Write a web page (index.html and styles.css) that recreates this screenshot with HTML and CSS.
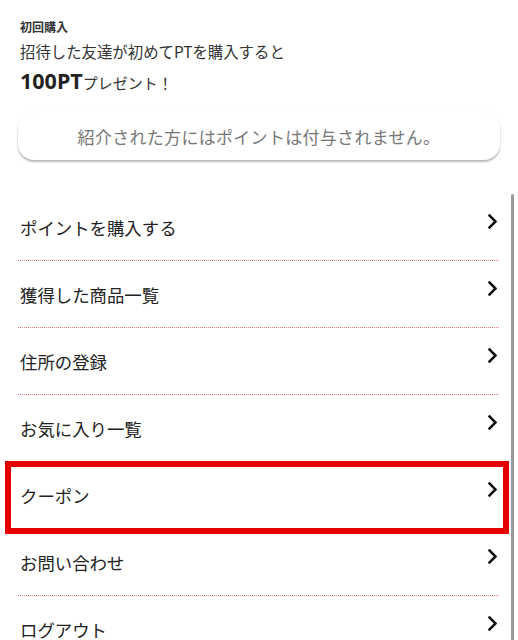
FILE: index.html
```html
<!DOCTYPE html>
<html lang="ja">
<head>
<meta charset="utf-8">
<link rel="stylesheet" href="styles.css">
</head>
<body>
<div class="page">
  <section class="intro">
    <div class="label">初回購入</div>
    <div class="desc">招待した友達が初めてPTを購入すると</div>
    <div class="gift"><span class="pt">100PT</span><span class="gift-text">プレゼント！</span></div>
    <div class="notice">紹介された方にはポイントは付与されません。</div>
  </section>
  <ul class="menu">
    <li class="item"><span>ポイントを購入する</span><svg class="chev" viewBox="0 0 9 15"><path d="M1.5 1.5 L7.5 7.5 L1.5 13.5" /></svg></li>
    <li class="item"><span>獲得した商品一覧</span><svg class="chev" viewBox="0 0 9 15"><path d="M1.5 1.5 L7.5 7.5 L1.5 13.5" /></svg></li>
    <li class="item"><span>住所の登録</span><svg class="chev" viewBox="0 0 9 15"><path d="M1.5 1.5 L7.5 7.5 L1.5 13.5" /></svg></li>
    <li class="item"><span>お気に入り一覧</span><svg class="chev" viewBox="0 0 9 15"><path d="M1.5 1.5 L7.5 7.5 L1.5 13.5" /></svg></li>
    <li class="item highlighted"><span>クーポン</span><svg class="chev" viewBox="0 0 9 15"><path d="M1.5 1.5 L7.5 7.5 L1.5 13.5" /></svg></li>
    <li class="item"><span>お問い合わせ</span><svg class="chev" viewBox="0 0 9 15"><path d="M1.5 1.5 L7.5 7.5 L1.5 13.5" /></svg></li>
    <li class="item"><span>ログアウト</span><svg class="chev" viewBox="0 0 9 15"><path d="M1.5 1.5 L7.5 7.5 L1.5 13.5" /></svg></li>
  </ul>
  <div class="scrollbar"></div>
</div>
</body>
</html>
```
FILE: styles.css
```css
* { box-sizing: border-box; }
html, body { margin: 0; padding: 0; background: #fff; }
body {
  font-family: "Noto Sans CJK JP", "Noto Sans", sans-serif;
  color: #222;
  overflow: hidden;
  height: 640px;
}
.page {
  position: relative;
  padding: 0 18px;
  height: 640px;
}
.intro {
  padding-top: 18px;
}
.label {
  font-size: 12px;
  font-weight: 700;
  line-height: 18px;
  padding-left: 2px;
  color: #333;
}
.desc {
  font-size: 15.4px;
  line-height: 22px;
  margin-top: 4px;
  padding-left: 2px;
  color: #333;
}
.gift {
  margin-top: 5px;
  padding-left: 2px;
  line-height: 28px;
  display: flex;
  align-items: baseline;
}
.pt {
  font-family: "Noto Sans", sans-serif;
  font-size: 21.5px;
  font-weight: 700;
  color: #222;
}
.gift-text {
  font-size: 15px;
  color: #333;
  margin-left: 0;
}
.notice {
  margin-top: 15px;
  height: 48px;
  border-radius: 16px;
  background: #fff;
  box-shadow: 0 2px 2px rgba(0,0,0,0.28), 0 0 2px rgba(0,0,0,0.05);
  display: flex;
  align-items: center;
  justify-content: center;
  font-size: 17px;
  color: #777;
  letter-spacing: 0.3px;
}
.menu {
  list-style: none;
  margin: 34px 0 0;
  padding: 0;
}
.item {
  position: relative;
  height: 67px;
  display: flex;
  align-items: center;
  justify-content: space-between;
  padding: 0 3px 0 2px;
  background-image: linear-gradient(to right, #f07a7a 50%, transparent 50%);
  background-size: 2px 1px;
  background-repeat: repeat-x;
  background-position: left bottom;
  font-size: 17.4px;
  color: #222;
}
.item span { line-height: 24px; }
.chev {
  width: 9px;
  height: 15px;
  margin-top: -12px;
  fill: none;
  stroke: #111;
  stroke-width: 2.5;
  stroke-linecap: square;
}
.highlighted::after {
  content: "";
  position: absolute;
  top: -1px;
  bottom: -5px;
  left: -13px;
  right: -9px;
  border: 6px solid #e60000;
  pointer-events: none;
}
.scrollbar {
  position: absolute;
  top: 194px;
  bottom: 0;
  left: 511px;
  width: 3px;
  background: #9a9a9a;
  border-radius: 2px 2px 0 0;
}
```
